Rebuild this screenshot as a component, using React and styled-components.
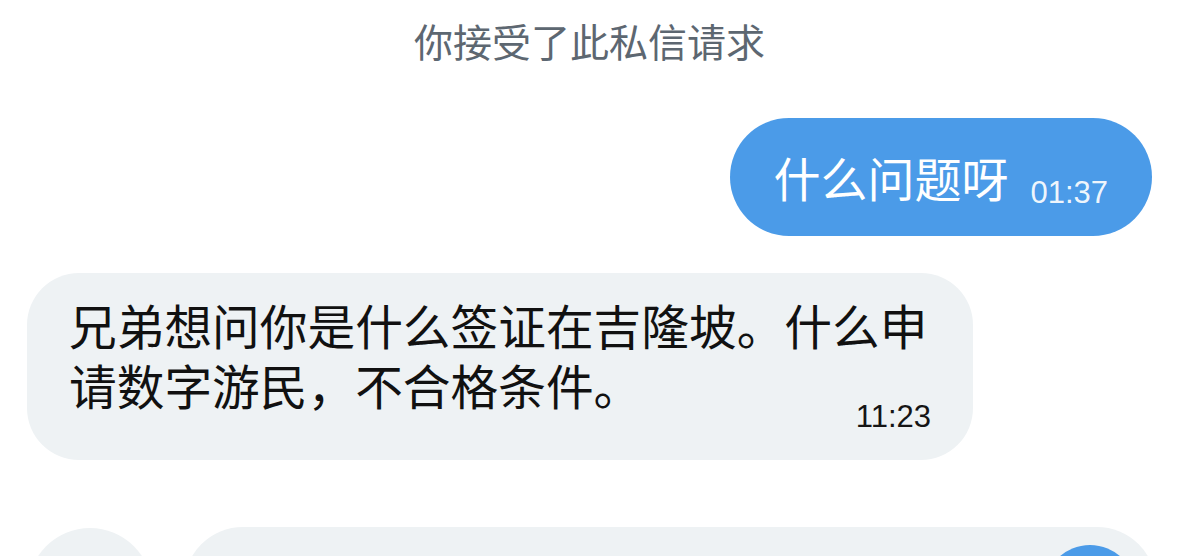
import React from "react";
import styled, { createGlobalStyle } from "styled-components";

const GlobalStyle = createGlobalStyle`
  html, body {
    margin: 0;
    padding: 0;
    background: #ffffff;
  }
  body {
    font-family: "Noto Sans CJK SC", "Noto Sans", sans-serif;
    -webkit-font-smoothing: antialiased;
  }
`;

const Screen = styled.div`
  width: 1179px;
  height: 556px;
  overflow: hidden;
  display: flex;
  flex-direction: column;
  background: #ffffff;
`;

const SystemNotice = styled.div`
  margin-top: 16px;
  text-align: center;
  font-size: 39px;
  line-height: 48px;
  color: #5d6771;
`;

const Row = styled.div`
  display: flex;
  justify-content: ${(p) => (p.$mine ? "flex-end" : "flex-start")};
  padding: ${(p) => (p.$mine ? "0 27px 0 0" : "0 0 0 27px")};
  margin-top: ${(p) => p.$gap}px;
`;

const OutBubble = styled.div`
  display: flex;
  align-items: center;
  height: 118px;
  padding: 0 44px 0 43px;
  border-radius: 59px;
  background: #4b9be8;
  color: #ffffff;
`;

const InBubble = styled.div`
  display: flow-root;
  width: 946px;
  box-sizing: border-box;
  padding: 22px 42px 25px 42px;
  border-radius: 52px;
  background: #eef2f4;
  color: #111111;
`;

const MessageText = styled.div`
  font-size: ${(p) => p.$size}px;
  line-height: 60px;
  word-break: break-all;
`;

const OutTime = styled.span`
  font-family: "Liberation Sans", Arial, sans-serif;
  font-size: 31px;
  line-height: 36px;
  color: rgba(255, 255, 255, 0.92);
  margin-left: 22px;
  margin-top: 32px;
`;

/* timestamp floats to the right end of the last line, a bit below it */
const InTime = styled.span`
  float: right;
  font-family: "Liberation Sans", Arial, sans-serif;
  font-size: 31px;
  line-height: 36px;
  margin-top: 44px;
  color: #151515;
`;

const Composer = styled.div`
  display: flex;
  align-items: flex-start;
  gap: 32px;
  margin-top: 67px;
  padding: 0 23px 0 28px;
`;

const RoundButton = styled.div`
  flex: none;
  width: 124px;
  height: 124px;
  margin-top: 1px;
  border-radius: 50%;
  background: #eef2f4;
`;

const InputField = styled.div`
  flex: 1;
  display: flex;
  justify-content: flex-end;
  height: 128px;
  box-sizing: border-box;
  padding: 18px 20px;
  border-radius: 59px;
  background: #eef2f4;
`;

const SendButton = styled.div`
  width: 92px;
  height: 92px;
  border-radius: 50%;
  background: #4b9be8;
  display: flex;
  align-items: center;
  justify-content: center;
`;

const messages = [
  { id: 1, mine: true, text: "什么问题呀", time: "01:37", gap: 54 },
  {
    id: 2,
    mine: false,
    text: "兄弟想问你是什么签证在吉隆坡。什么申请数字游民，不合格条件。",
    time: "11:23",
    gap: 37,
  },
];

const App = () => {
  return (
    <React.Fragment>
      <GlobalStyle />
      <Screen>
        <SystemNotice>你接受了此私信请求</SystemNotice>
        {messages.map((m) =>
          m.mine ? (
            <Row key={m.id} $mine $gap={m.gap}>
              <OutBubble>
                <MessageText $size={47}>{m.text}</MessageText>
                <OutTime>{m.time}</OutTime>
              </OutBubble>
            </Row>
          ) : (
            <Row key={m.id} $gap={m.gap}>
              <InBubble>
                <MessageText $size={47.7}>
                  {m.text}
                  <InTime>{m.time}</InTime>
                </MessageText>
              </InBubble>
            </Row>
          )
        )}
        <Composer>
          <RoundButton />
          <InputField>
            <SendButton>
              <svg width="40" height="40" viewBox="0 0 24 24" fill="none" stroke="#fff" strokeWidth="2.6" strokeLinecap="round" strokeLinejoin="round">
                <path d="M12 19V5" />
                <path d="M5 12l7-7 7 7" />
              </svg>
            </SendButton>
          </InputField>
        </Composer>
      </Screen>
    </React.Fragment>
  );
};

export default App;
